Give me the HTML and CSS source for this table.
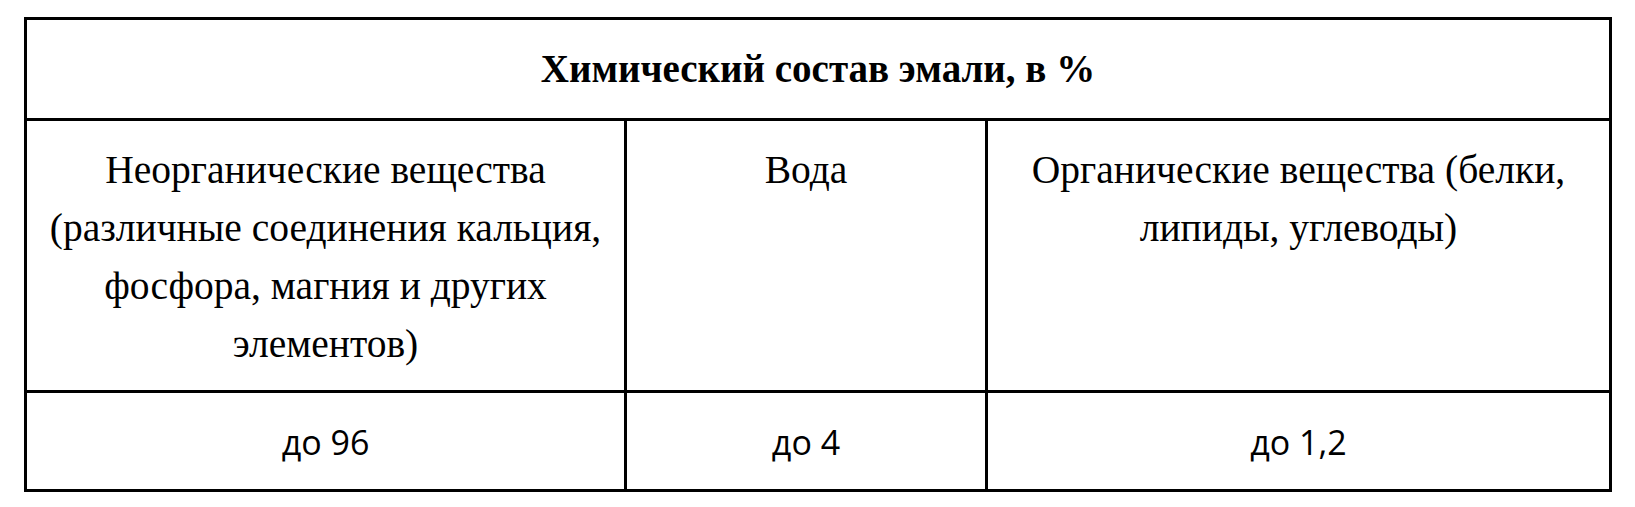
FILE: index.html
```html
<!DOCTYPE html>
<html lang="ru">
<head>
<meta charset="utf-8">
<link rel="stylesheet" href="styles.css">
<title>Химический состав эмали</title>
</head>
<body>
<div class="table">
  <div class="cell head">Химический состав эмали, в %</div>
  <div class="cell text">Неорганические вещества (различные соединения кальция, фосфора, магния и других элементов)</div>
  <div class="cell text">Вода</div>
  <div class="cell text">Органические вещества (белки, липиды, углеводы)</div>
  <div class="cell value">до 96</div>
  <div class="cell value">до 4</div>
  <div class="cell value">до 1,2</div>
</div>
</body>
</html>
```
FILE: styles.css
```css
html, body {
  margin: 0;
  padding: 0;
  background: #ffffff;
}

.table {
  margin: 17px 0 0 24px;
  width: 1588px;
  display: grid;
  grid-template-columns: 600px 361px 624px;
  grid-template-rows: 101px 272px 99px;
  border-left: 3px solid #000;
  border-top: 3px solid #000;
  box-sizing: border-box;
  color: #000;
}

.cell {
  border-right: 3px solid #000;
  border-bottom: 3px solid #000;
  box-sizing: border-box;
  text-align: center;
}

.head {
  grid-column: 1 / -1;
  display: flex;
  align-items: center;
  justify-content: center;
  font-family: "Liberation Serif", serif;
  font-weight: bold;
  font-size: 39px;
  padding-bottom: 2px;
}

.text {
  font-family: "Liberation Serif", serif;
  font-weight: normal;
  font-size: 39.5px;
  line-height: 58px;
  padding: 20px 14px 0;
}

.value {
  display: flex;
  align-items: center;
  justify-content: center;
  font-family: "Open Sans", "Noto Sans", sans-serif;
  font-size: 34px;
  padding-top: 2px;
}
```
